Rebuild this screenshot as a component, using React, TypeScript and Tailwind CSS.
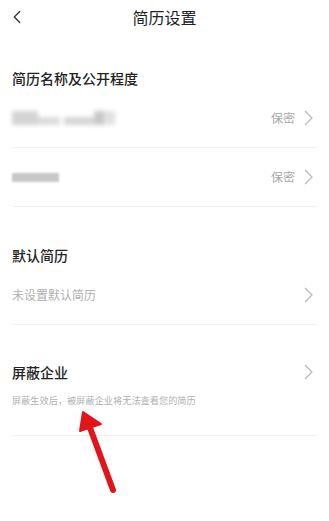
import { ChevronLeft } from "lucide-react";

const font = { fontFamily: '"Noto Sans CJK SC", "Noto Sans", sans-serif' };

const Arrow = () => (
  <svg width="9" height="16" viewBox="0 0 9 16" className="text-[#b8b8b8]">
    <polyline points="1,1 8,8 1,15" fill="none" stroke="currentColor" strokeWidth="1.2" />
  </svg>
);

const Row = ({ children, right }: { children: React.ReactNode; right?: string }) => (
  <div className="flex items-center justify-between h-[59px] border-b border-[#f1f1f1]">
    <div className="flex items-center">{children}</div>
    <div className="flex items-center gap-[9px] pr-[4px] text-[12px] text-[#a8a8a8]">
      {right && <span>{right}</span>}
      <Arrow />
    </div>
  </div>
);

const App = () => {
  return (
    <div className="relative w-[329px] h-[521px] bg-white overflow-hidden" style={font}>
      <div className="relative flex items-center justify-center h-[34px]">
        <ChevronLeft size={22} strokeWidth={1.4} className="absolute left-[6px] top-[6px] text-[#333]" />
        <span className="text-[16px] text-[#222]">简历设置</span>
      </div>

      <div className="px-3">
        <div className="pt-[33px] leading-[22px] text-[14px] font-medium text-[#222]">简历名称及公开程度</div>
        <Row right="保密">
          <div className="flex items-center h-[14px] w-[103px] blur-[2px]">
            <div className="h-full w-[26px] bg-[#d4d4d4]" />
            <div className="h-[8px] mt-[6px] w-[22px] bg-[#dcdcdc]" />
            <div className="h-[8px] mt-[6px] w-[30px] ml-[4px] bg-[#d6d6d6]" />
            <div className="h-full w-[10px] bg-[#c9c9c9]" />
            <div className="h-full w-[11px] bg-[#e2e2e2]" />
          </div>
        </Row>
        <Row right="保密">
          <div className="h-[9px] w-[47px] bg-[#c8c8c8] blur-[1px]" />
        </Row>

        <div className="pt-[37px] leading-[22px] text-[14px] font-medium text-[#222]">默认简历</div>
        <Row>
          <span className="text-[12px] text-[#b0b0b0]">未设置默认简历</span>
        </Row>

        <div className="pt-[36px] border-b border-[#f1f1f1] pb-[28px]">
          <div className="flex items-center justify-between h-[22px] pr-[4px]">
            <span className="text-[14px] font-medium text-[#222]">屏蔽企业</span>
            <Arrow />
          </div>
          <div className="mt-[10px] leading-[14px] text-[9.2px] text-[#b0b0b0]">屏蔽生效后，被屏蔽企业将无法查看您的简历</div>
        </div>
      </div>

      <svg className="absolute left-0 top-0 pointer-events-none" width="329" height="521">
        <line x1="113" y1="490" x2="89" y2="425" stroke="#e0161c" strokeWidth="6" strokeLinecap="round" />
        <polygon points="83,412 80,431 101,424" fill="#e0161c" stroke="#e0161c" strokeWidth="2" strokeLinejoin="round" />
      </svg>
    </div>
  );
};

export default App;
